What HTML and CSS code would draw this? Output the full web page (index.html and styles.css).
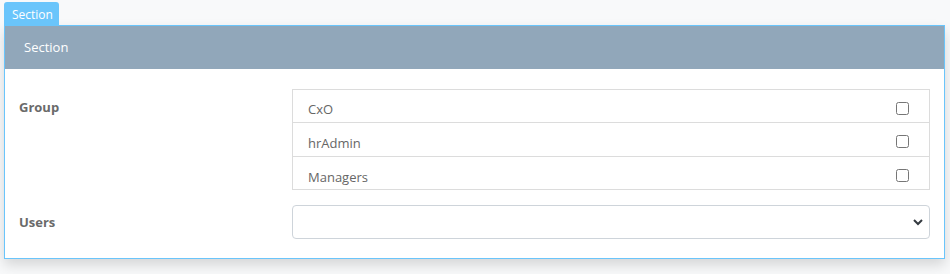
FILE: index.html
```html
<!DOCTYPE html>
<html>
<head>
<meta charset="utf-8">
<link rel="stylesheet" href="styles.css">
</head>
<body>
<div class="page">
  <div class="tab">Section</div>
  <div class="card">
    <div class="card-header">Section</div>
    <div class="card-body">
      <div class="form-row">
        <div class="label label-top">Group</div>
        <ul class="check-list">
          <li class="check-item"><span>CxO</span><input type="checkbox"></li>
          <li class="check-item"><span>hrAdmin</span><input type="checkbox"></li>
          <li class="check-item"><span>Managers</span><input type="checkbox"></li>
        </ul>
      </div>
      <div class="form-row form-row-center">
        <div class="label">Users</div>
        <div class="select">
          <svg class="chev" width="10" height="8" viewBox="0 0 10 8"><path d="M1 2 L5 6 L9 2" fill="none" stroke="#343a40" stroke-width="2"/></svg>
        </div>
      </div>
    </div>
  </div>
</div>
</body>
</html>
```

FILE: styles.css
```css
* { box-sizing: border-box; }
html, body { margin: 0; padding: 0; }
body {
  background: #f8f9fa;
  font-family: "Open Sans", "Segoe UI", sans-serif;
  font-size: 13px;
  width: 950px;
  height: 274px;
  overflow: hidden;
}
.page {
  padding: 2px 6px 0 4px;
}
.tab {
  display: inline-block;
  background: #6ac5fb;
  color: #fff;
  font-size: 12px;
  line-height: 18px;
  height: 23px;
  padding: 4px 6px 0 8px;
  border-radius: 3px 3px 0 0;
  width: 55px;
}
.card {
  border: 1px solid #6ac5fb;
  background: #fff;
  box-shadow: 0 6px 12px rgba(0,0,0,0.14);
  width: 941px;
}
.card-header {
  background: #91a7ba;
  color: #fff;
  height: 43px;
  line-height: 43px;
  padding-left: 19px;
  font-size: 13px;
}
.card-body {
  padding: 20px 14px 19px 14px;
}
.form-row {
  display: grid;
  grid-template-columns: 273px 1fr;
}
.form-row + .form-row {
  margin-top: 15px;
}
.form-row-center {
  align-items: center;
}
.label {
  color: #6a6a6a;
  font-weight: 700;
  font-size: 13px;
}
.label-top {
  padding-top: 9px;
}
.check-list {
  list-style: none;
  margin: 0;
  padding: 0;
  border: 1px solid #dcdcdc;
}
.check-item {
  display: flex;
  align-items: center;
  justify-content: space-between;
  height: 34px;
  padding: 4px 20px 0 15px;
  color: #666;
  border-top: 1px solid #dcdcdc;
}
.check-item input {
  margin: 0;
  width: 13px;
  height: 13px;
}
.check-item:first-child {
  border-top: none;
  height: 32px;
  padding-top: 5px;
}
.check-item:nth-child(2) span {
  padding-top: 2px;
}
.check-item:last-child {
  height: 33px;
}
.check-item:last-child span {
  padding-top: 4px;
}
.select {
  height: 34px;
  border: 1px solid #ced4da;
  border-radius: 4px;
  display: flex;
  align-items: center;
  justify-content: flex-end;
  padding-right: 6px;
}
```
